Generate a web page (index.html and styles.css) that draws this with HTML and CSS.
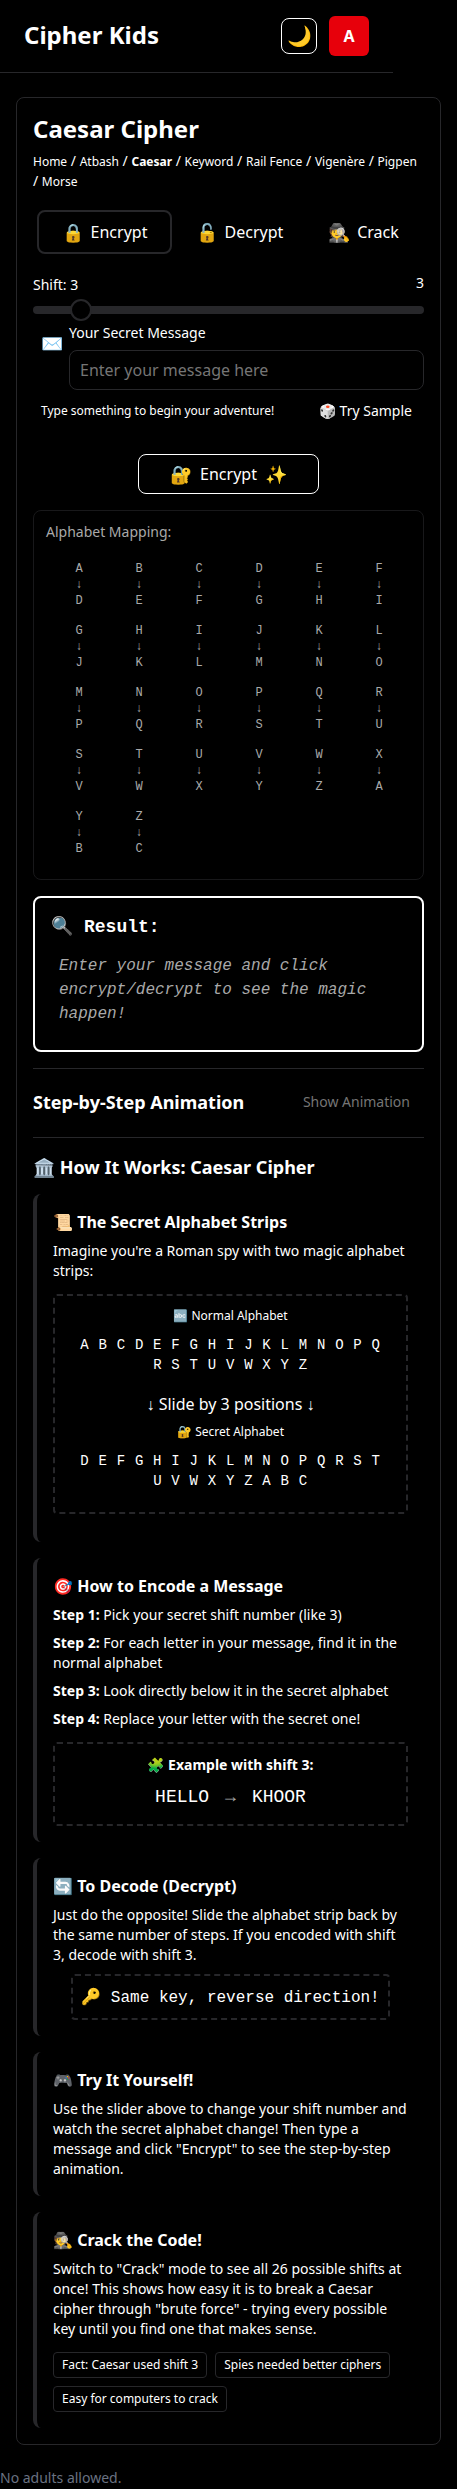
FILE: index.html
```html
<!DOCTYPE html>
<html lang="en">
<head>
<meta charset="utf-8">
<title>Cipher Kids</title>
<link rel="stylesheet" href="styles.css">
</head>
<body>
<header class="topbar">
  <h1 class="brand">Cipher Kids</h1>
  <div class="actions">
    <button class="theme">🌙</button>
    <div class="avatar">A</div>
  </div>
</header>
<main class="card">
  <h2 class="title">Caesar Cipher</h2>
  <nav class="crumbs"><a>Home</a> / <a>Atbash</a> / <a class="current">Caesar</a> / <a>Keyword</a> / <a>Rail Fence</a> / <a>Vigenère</a> / <a>Pigpen</a> /&nbsp;<a>Morse</a></nav>
  <div class="tabs">
    <button class="tab tab-on"><span class="emoji">🔒</span><span>Encrypt</span></button>
    <button class="tab"><span class="emoji">🔓</span><span>Decrypt</span></button>
    <button class="tab tab-last"><span class="emoji">🕵️</span><span>Crack</span></button>
  </div>
  <div class="shift"><span>Shift: 3</span><span class="shift-value">3</span></div>
  <div class="track"><div class="thumb"></div></div>
  <div class="message">
    <span class="envelope">✉️</span>
    <div class="field">
      <label class="label" for="msg">Your Secret Message</label>
      <input class="input" id="msg" placeholder="Enter your message here">
    </div>
  </div>
  <div class="hint"><span class="hint-text">Type something to begin your adventure!</span><span class="sample">🎲 Try Sample</span></div>
  <button class="go"><span class="emoji">🔐</span><span>Encrypt</span><span class="emoji">✨</span></button>
  <section class="mapping">
    <p class="mapping-title">Alphabet Mapping:</p>
    <div class="grid" id="grid"></div>
  </section>
  <section class="result">
    <h3 class="result-title"><span class="emoji">🔍</span><span>Result:</span></h3>
    <p class="result-text">Enter your message and click encrypt/decrypt to see the magic happen!</p>
  </section>
  <section class="steps">
    <h3 class="subhead">Step-by-Step Animation</h3>
    <button class="show">Show Animation</button>
  </section>
  <section class="how">
    <h3 class="subhead how-title">🏛️ How It Works: Caesar Cipher</h3>
    <article class="note note-strips">
      <h4>📜 The Secret Alphabet Strips</h4>
      <p>Imagine you're a Roman spy with two magic alphabet strips:</p>
      <div class="dashed strips">
        <div class="strip-label">🔤 Normal Alphabet</div>
        <div class="strip">A B C D E F G H I J K L M N O P Q R S T U V W X Y Z</div>
        <div class="slide">↓ Slide by 3 positions ↓</div>
        <div class="strip-label">🔐 Secret Alphabet</div>
        <div class="strip">D E F G H I J K L M N O P Q R S T U V W X Y Z A B C</div>
      </div>
    </article>
    <article class="note">
      <h4>🎯 How to Encode a Message</h4>
      <p><b>Step 1:</b> Pick your secret shift number (like 3)</p>
      <p><b>Step 2:</b> For each letter in your message, find it in the normal alphabet</p>
      <p><b>Step 3:</b> Look directly below it in the secret alphabet</p>
      <p><b>Step 4:</b> Replace your letter with the secret one!</p>
      <div class="dashed example">
        <div class="example-title">🧩 Example with shift 3:</div>
        <div class="example-row"><span>HELLO</span><span class="arrow">→</span><span>KHOOR</span></div>
      </div>
    </article>
    <article class="note">
      <h4>🔄 To Decode (Decrypt)</h4>
      <p>Just do the opposite! Slide the alphabet strip back by the same number of steps. If you encoded with shift 3, decode with shift 3.</p>
      <div class="dashed key">🔑 Same key, reverse direction!</div>
    </article>
    <article class="note note-text">
      <h4>🎮 Try It Yourself!</h4>
      <p>Use the slider above to change your shift number and watch the secret alphabet change! Then type a message and click "Encrypt" to see the step-by-step animation.</p>
    </article>
    <article class="note">
      <h4>🕵️ Crack the Code!</h4>
      <p>Switch to "Crack" mode to see all 26 possible shifts at once! This shows how easy it is to break a Caesar cipher through "brute force" - trying every possible key until you find one that makes sense.</p>
      <div class="chips"><span>Fact: Caesar used shift 3</span><span>Spies needed better ciphers</span><span>Easy for computers to crack</span></div>
    </article>
  </section>
</main>
<footer class="footer">No adults allowed.</footer>
<script src="mapping.js"></script>
</body>
</html>
```
FILE: mapping.js
```js
const letters = 'ABCDEFGHIJKLMNOPQRSTUVWXYZ';
const shift = 3;
document.getElementById('grid').innerHTML = [...letters].map((c, i) =>
  `<div class="pair"><span>${c}</span><span class="down">↓</span><span>${letters[(i + shift) % 26]}</span></div>`
).join('');
```
FILE: styles.css
```css
* { box-sizing: border-box; margin: 0; padding: 0; }
body { background: #000; color: #fff; font: 14px/20px "Noto Sans", sans-serif; }
button { font: inherit; color: inherit; background: none; border: 0; }
b { font-weight: 700; }
.emoji { font-size: 18px; font-weight: 400; }

.topbar { width: 393px; height: 73px; padding: 0 24px; display: flex; align-items: center; justify-content: space-between; border-bottom: 1px solid #27272a; }
.brand { padding-bottom: 2px; font-size: 24px; line-height: 32px; font-weight: 700; }
.actions { display: flex; align-items: center; gap: 12px; }
.theme { display: flex; align-items: center; justify-content: center; width: 36px; height: 36px; border: 1px solid #fff; border-radius: 8px; font-size: 20px; }
.avatar { width: 40px; height: 40px; border-radius: 6px; background: #e7000b; font-size: 16px; font-weight: 700; line-height: 40px; text-align: center; }

.card { margin: 24px 16px 0; height: 2348px; padding: 15px 16px 16px; border: 1px solid #27272a; border-radius: 8px; }
.title { font-size: 24px; line-height: 32px; font-weight: 700; }
.crumbs { height: 40px; margin-top: 6px; font-size: 14px; line-height: 20px; }
.crumbs a { font-size: 12px; line-height: 16px; }
.crumbs .current { font-weight: 700; }
.tabs { display: flex; height: 44px; margin: 19px 4px 0; }
.tab { width: 135px; display: flex; align-items: center; justify-content: center; gap: 7px; font-size: 16px; }
.tab-on { border: 2px solid #27272a; border-radius: 8px; }
.tab-last { width: 113px; }
.shift { display: flex; justify-content: space-between; margin-top: 21px; height: 31px; }
.shift-value { margin-top: -2px; }
.track { position: relative; height: 8px; border-radius: 4px; background: #27272a; }
.thumb { position: absolute; left: 37px; top: -7px; width: 22px; height: 22px; border: 2px solid #27272a; border-radius: 50%; background: #000; }
.message { display: flex; margin-top: 9px; padding-left: 8px; }
.envelope { width: 28px; font-size: 18px; line-height: 40px; }
.field { flex: 1; }
.label { display: block; line-height: 20px; }
.input { display: block; width: 100%; height: 40px; margin-top: 7px; padding: 0 10px; border: 1px solid #27272a; border-radius: 8px; background: #000; color: #fff; font: 16px/24px "Noto Sans", sans-serif; }
.input::placeholder { color: #757575; }
.hint { display: flex; justify-content: space-between; margin-top: 11px; padding: 0 12px 0 8px; }
.hint-text { font-size: 12px; }
.go { display: flex; align-items: center; justify-content: center; gap: 8px; width: 181px; height: 40px; margin: 33px auto 0; border: 1px solid #fff; border-radius: 8px; font-size: 16px; }

.mapping { height: 370px; margin-top: 16px; padding: 11px 12px 12px; border: 1px solid #18181a; border-radius: 8px; color: #a9a9a9; }
.grid { display: grid; grid-template-columns: repeat(6, 60px); row-gap: 14px; margin: 19px 3px 0; font: 12px/16px "Liberation Mono", monospace; }
.pair { display: flex; flex-direction: column; align-items: center; }

.result { height: 156px; margin-top: 16px; padding: 16px; border: 2px solid #fff; border-radius: 8px; font-family: "Liberation Mono", monospace; }
.result-title { display: flex; gap: 11px; font-size: 18px; line-height: 26px; font-weight: 700; }
.result-text { padding: 14px 8px 0; font-size: 16px; line-height: 24px; font-style: italic; color: #a9a9a9; }
.steps { display: flex; align-items: center; justify-content: space-between; height: 69px; margin-top: 16px; border-top: 1px solid #27272a; padding: 0 14px 2px 0; }
.subhead { font-size: 18px; line-height: 28px; font-weight: 700; }
.show { color: #757575; }
.how { border-top: 1px solid #27272a; padding-top: 15px; }
.how-title { margin-bottom: 13px; }

.note { border-left: 4px solid #27272a; border-radius: 8px; padding: 16px; margin-bottom: 16px; }
.note h4 { font-size: 16px; line-height: 24px; font-weight: 700; margin-bottom: 7px; }
.note p { margin-bottom: 8px; }
.dashed { border: 2px dashed #27272a; border-radius: 4px; text-align: center; }
.strips { height: 220px; margin-top: 13px; padding: 10px 24px; }
.note-strips { padding-bottom: 28px; }
.strip-label { font-size: 12px; line-height: 20px; }
.strip { margin: 9px 0; font: 14px/20px "Liberation Mono", monospace; letter-spacing: .7px; }
.slide { margin: 17px 0 6px; font-size: 16px; line-height: 24px; }
.example { height: 84px; margin-top: 13px; padding-top: 11px; }
.example-title { font-weight: 700; }
.example-row { display: flex; justify-content: center; gap: 16px; margin-top: 8px; font: 18px/28px "Liberation Mono", monospace; }
.arrow { color: #a9a9a9; }
.key { width: 319px; height: 46px; margin: 9px auto 0; padding-top: 1px; font: 16px/42px "Liberation Mono", monospace; white-space: nowrap; }
.note-text { padding-bottom: 9px; }
.chips { display: flex; flex-wrap: wrap; gap: 8px; padding-top: 5px; }
.chips span { height: 26px; padding: 0 8px; border: 1px solid #27272a; border-radius: 4px; font-size: 12px; line-height: 24px; }
.footer { margin-top: 23px; color: #6a7282; }
```
